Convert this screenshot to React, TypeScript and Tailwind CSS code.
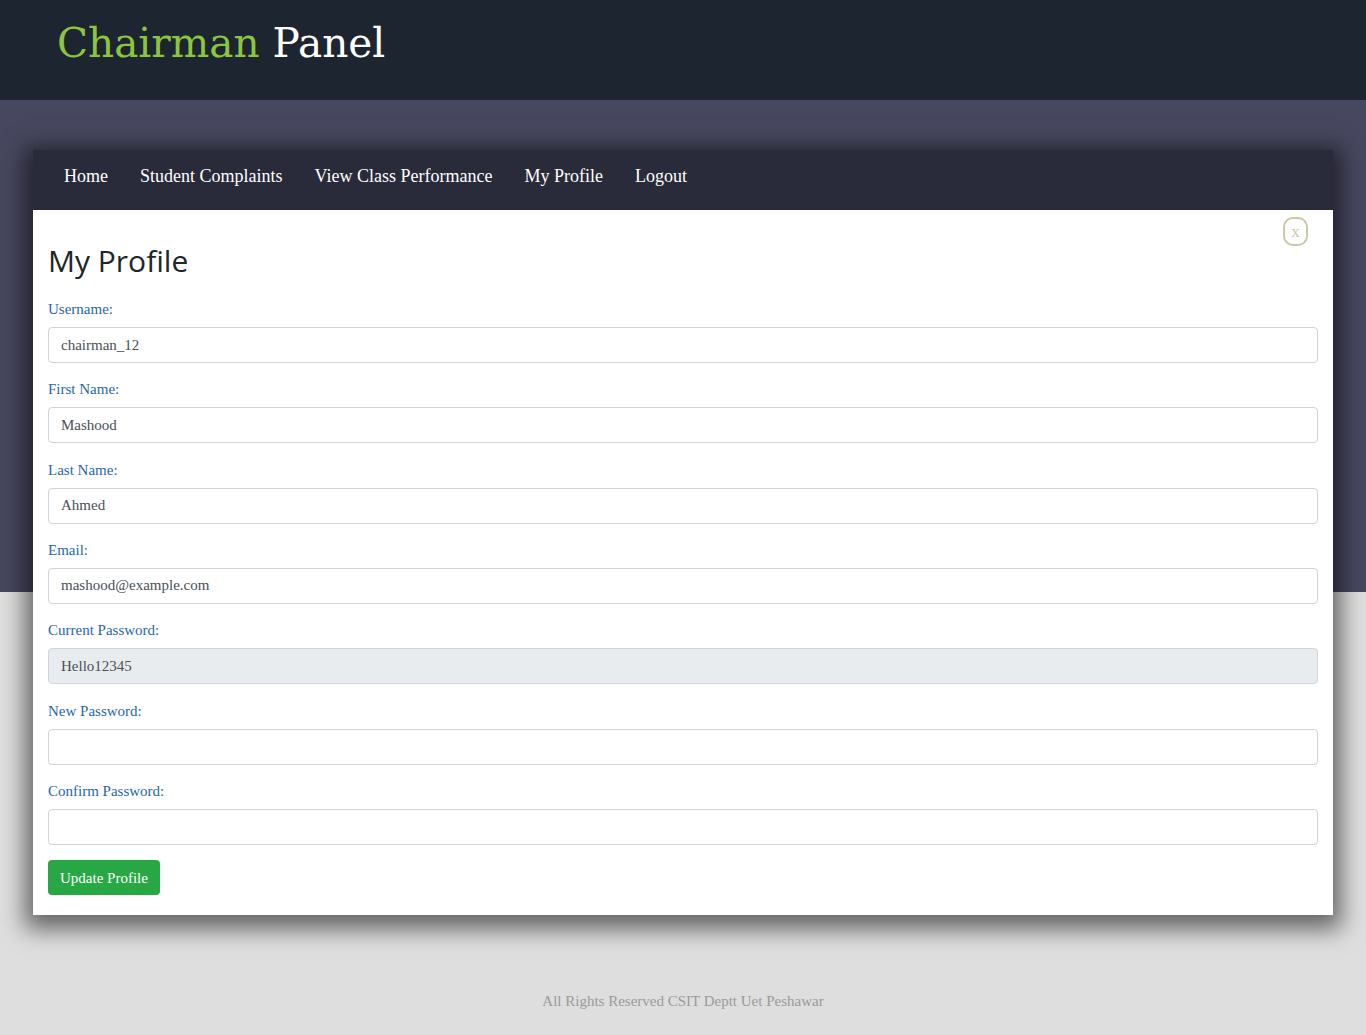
import React from 'react';

// Profile form fields, in display order
const fields = [
  { id: 'username', label: 'Username:', value: 'chairman_12' },
  { id: 'first', label: 'First Name:', value: 'Mashood' },
  { id: 'last', label: 'Last Name:', value: 'Ahmed' },
  { id: 'email', label: 'Email:', value: 'mashood@example.com' },
  { id: 'current', label: 'Current Password:', value: 'Hello12345', disabled: true },
  { id: 'new', label: 'New Password:', value: '' },
  { id: 'confirm', label: 'Confirm Password:', value: '' },
];

const navLinks = ['Home', 'Student Complaints', 'View Class Performance', 'My Profile', 'Logout'];

export default function App() {
  return (
    <div className="min-h-[1035px] bg-[linear-gradient(to_bottom,#1d2530_100px,#47475f_100px,#47475f_592px,#dedede_592px)] font-['Liberation_Serif',serif]">
      <header className="h-[100px] pl-[57px] pt-[15px]">
        <h1 className="font-['DejaVu_Serif',serif] text-[40.6px] leading-[56px]">
          <span className="text-[#8cc63f]">Chairman</span> <span className="text-white">Panel</span>
        </h1>
      </header>

      <div className="mx-[33px] mt-[50px] bg-white shadow-[0_6px_22px_8px_rgba(0,0,0,0.55)]">
        <nav className="flex h-[60px] items-center bg-[#292a3a] px-[15px] pb-[8px]">
          {navLinks.map((link) => (
            <a key={link} href="#" className="px-4 text-[18px] text-white">
              {link}
            </a>
          ))}
        </nav>

        <div className="relative px-[15px] pb-[20px] pt-[33px]">
          <button className="absolute right-[25px] top-[7px] flex h-[29px] w-[25px] items-center justify-center rounded-[10px] border-2 border-[#c8c8a8] text-[17px] leading-none text-[#c8c8a8]">
            x
          </button>
          <h2 className="mb-[18px] font-['Open_Sans',sans-serif] text-[30px] font-medium leading-[36px] text-[#212529]">
            My Profile
          </h2>
          {fields.map((f) => (
            <div key={f.id} className="mb-[14.33px]">
              <label htmlFor={f.id} className="mb-[6px] block text-[15px] leading-[24px] text-[#1f67ad]">
                {f.label}
              </label>
              <input
                id={f.id}
                defaultValue={f.value}
                disabled={f.disabled}
                className={`block h-[36px] w-full rounded-[4px] border border-[#ced4da] px-[12px] text-[15px] text-[#495057] outline-none ${
                  f.disabled ? 'bg-[#e9ecef]' : 'bg-white'
                }`}
              />
            </div>
          ))}
          <button className="mt-[1px] h-[35px] rounded-[4px] bg-[#28a745] px-[12px] text-[15px] text-white">
            Update Profile
          </button>
        </div>
      </div>

      <footer className="pb-[24px] pt-[76px] text-center text-[15px] leading-[20px] text-[#9a9a9a]">
        All Rights Reserved CSIT Deptt Uet Peshawar
      </footer>
    </div>
  );
}
